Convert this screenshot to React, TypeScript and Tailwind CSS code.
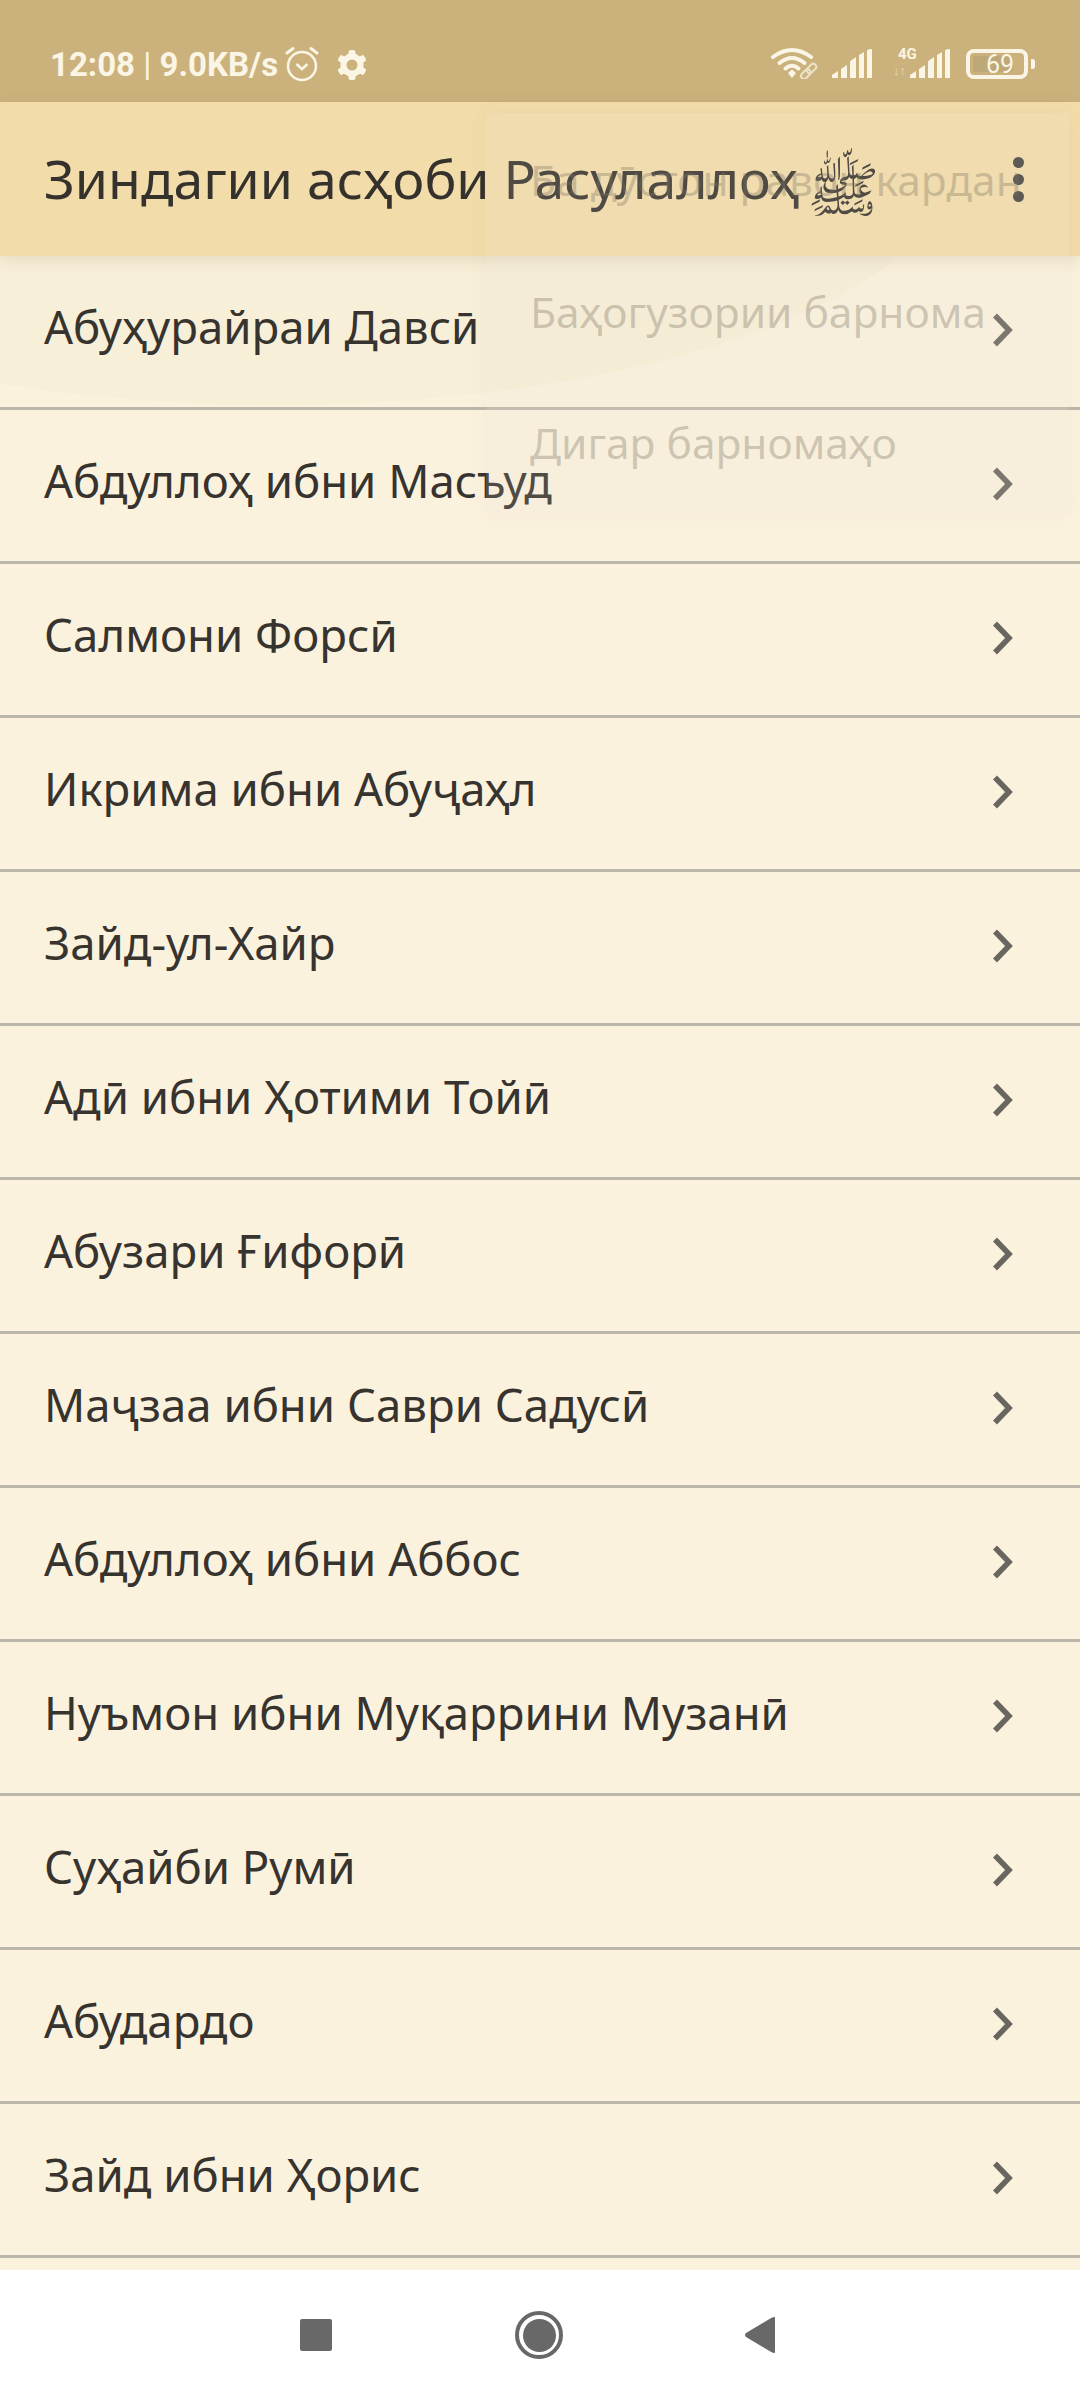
const COMPANIONS = [
  'Абуҳурайраи Давсӣ',
  'Абдуллоҳ ибни Масъуд',
  'Салмони Форсӣ',
  'Икрима ибни Абуҷаҳл',
  'Зайд-ул-Хайр',
  'Адӣ ибни Ҳотими Тойӣ',
  'Абузари Ғифорӣ',
  'Маҷзаа ибни Саври Садусӣ',
  'Абдуллоҳ ибни Аббос',
  'Нуъмон ибни Муқаррини Музанӣ',
  'Суҳайби Румӣ',
  'Абудардо',
  'Зайд ибни Ҳорис',
]

const MENU_ITEMS = ['Ба дӯстон равон кардан', 'Баҳогузории барнома', 'Дигар барномаҳо']

function SignalBars() {
  return (
    <svg width="40" height="30" viewBox="0 0 40 30" fill="#fbf5e6">
      <path d="M0 29 L0 26 L6 22 L6 29 Z" />
      <path d="M9 29 V20 L15 16 V29 Z" />
      <path d="M18 29 V13 Q18 12 19 11.500 L24 8 V29 Z" />
      <path d="M27 29 V6 L32 3 V29 Z" />
      <path d="M35 29 V2 Q35 1 36 0.500 L40 0 V29 Z" />
    </svg>
  )
}

function WifiIcon() {
  return (
    <svg width="48" height="32" viewBox="0 0 48 32" fill="none">
      <path d="M2 10 Q21 -4 40 10" stroke="#fbf5e6" strokeWidth="4" strokeLinecap="round" />
      <path d="M8.500 16 Q21 6 33.500 16" stroke="#fbf5e6" strokeWidth="4" strokeLinecap="round" />
      <path d="M14.500 21.500 Q21 16 27.500 21.500" stroke="#fbf5e6" strokeWidth="4" strokeLinecap="round" />
      <path d="M17 26 L21 22.500 L25 26 L21 31 Z" fill="#fbf5e6" />
      <g stroke="#ece2c8" strokeWidth="2" transform="rotate(-45 38 24)">
        <rect x="28" y="21" width="11" height="6" rx="3" />
        <rect x="36" y="21" width="11" height="6" rx="3" />
      </g>
    </svg>
  )
}

function AlarmIcon() {
  return (
    <svg width="34" height="36" viewBox="0 0 34 36" fill="none" stroke="#fbf5e6">
      <circle cx="17" cy="20" r="14" strokeWidth="2.500" />
      <path d="M11.500 18 L17 23 L22.500 18" strokeWidth="2.500" />
      <path d="M2 7 L8 2.500" strokeWidth="3" strokeLinecap="round" />
      <path d="M32 7 L26 2.500" strokeWidth="3" strokeLinecap="round" />
    </svg>
  )
}

function GearIcon() {
  return (
    <svg width="30" height="30" viewBox="0 0 30 30">
      <g fill="#fbf5e6">
        <circle cx="15" cy="15" r="11.500" />
        <rect x="11.500" y="0" width="7" height="30" rx="2" />
        <rect x="11.500" y="0" width="7" height="30" rx="2" transform="rotate(60 15 15)" />
        <rect x="11.500" y="0" width="7" height="30" rx="2" transform="rotate(120 15 15)" />
      </g>
      <circle cx="15" cy="15" r="5.500" fill="#cbb27c" />
    </svg>
  )
}

function Chevron() {
  return (
    <svg className="mb-[3px]" width="22" height="34" viewBox="0 0 22 34" fill="none">
      <path d="M3 2.500 L17 17 L3 31.500" stroke="#69665f" strokeWidth="5.500" />
    </svg>
  )
}

function StatusBar() {
  return (
    <div className="flex h-[102px] shrink-0 items-start bg-[#cbb27c] pt-[46px] pl-[50px] pr-[45px] text-[#fbf5e6]">
      <span className="font-['Roboto',sans-serif] text-[33px] leading-[38px] font-bold whitespace-nowrap">
        12:08 <span className="font-normal">|</span> 9.0KB/s
      </span>
      <span className="ml-[7px]">
        <AlarmIcon />
      </span>
      <span className="ml-[18px] mt-[4px]">
        <GearIcon />
      </span>
      <div className="ml-auto flex items-start pt-[1px]">
        <span className="mr-[-3px]">
          <WifiIcon />
        </span>
        <span className="ml-[16px] mt-[2px]">
          <SignalBars />
        </span>
        <div className="relative ml-[38px] mt-[2px]">
          <span className="absolute -left-[12px] -top-[2px] font-['Roboto',sans-serif] text-[15px] leading-[15px] font-bold">
            4G
          </span>
          <span className="absolute -left-[17px] top-[15px] text-[13px] leading-[14px] font-['Roboto',sans-serif] text-[#e7dcc0]">
            ↓↑
          </span>
          <SignalBars />
        </div>
        <div className="ml-[16px] mt-[2px] flex items-center">
          <div className="flex h-[30px] w-[62px] items-center rounded-[8px] border-[4px] border-[#fbf5e6] p-[3px]">
            <div className="flex h-full w-[40px] items-center justify-center rounded-[2px] bg-[#bda877]">
              <span className="ml-[14px] font-['Roboto',sans-serif] text-[25px] leading-none text-[#fbf5e6]">
                69
              </span>
            </div>
          </div>
          <div className="ml-[3px] h-[10px] w-[4px] rounded-r-[2px] bg-[#fbf5e6]" />
        </div>
      </div>
    </div>
  )
}

function AppBar() {
  return (
    <header className="relative z-10 flex h-[154px] shrink-0 items-center bg-[#f2dcaa] pl-[44px] shadow-[0_4px_14px_rgba(90,70,30,0.12)]">
      <h1 className="text-[53.500px] leading-none font-normal whitespace-nowrap text-[#35312c]">
        Зиндагии асҳоби Расулаллоҳ
      </h1>
      <span className="ml-[8px] mt-[22px] font-['DejaVu_Sans',serif] text-[60px] leading-none text-[#35312c]">
        ﷺ
      </span>
      <div className="absolute left-[1013px] top-[55px] flex flex-col gap-[6px]">
        <span className="size-[11px] rounded-full bg-[#45433f]" />
        <span className="size-[11px] rounded-full bg-[#45433f]" />
        <span className="size-[11px] rounded-full bg-[#45433f]" />
      </div>
    </header>
  )
}

function CompanionRow({ name }: { name: string }) {
  return (
    <li className="flex h-[154px] shrink-0 items-center justify-between border-b-[3px] border-[#bcb7ab] pl-[44px] pr-[66px]">
      <span className="mb-[10px] text-[45.500px] leading-none whitespace-nowrap text-[#37332e]">{name}</span>
      <Chevron />
    </li>
  )
}

// popup is caught mid fade-in, so it's only a faint wash over the page
function FadingMenu() {
  return (
    <div className="absolute left-[486px] top-[113px] z-20 flex h-[402px] w-[583px] flex-col overflow-hidden bg-[#e4dcc6]/15 pl-[44px] shadow-[0_0_20px_rgba(120,100,60,0.05)]">
      {MENU_ITEMS.map((item) => (
        <div key={item} className="flex h-[131.500px] shrink-0 items-center pt-[3px]">
          <span className="text-[42.500px] leading-none whitespace-nowrap text-[#7d7464]/35">{item}</span>
        </div>
      ))}
    </div>
  )
}

function NavBar() {
  return (
    <nav className="relative flex h-[130px] shrink-0 items-center bg-white pl-[300px]">
      <div className="size-[32px] rounded-[2px] bg-[#686868]" />
      <div className="ml-[183px] flex size-[48px] items-center justify-center rounded-full border-[4px] border-[#686868]">
        <div className="size-[33px] rounded-full bg-[#686868]" />
      </div>
      <svg className="ml-[182px]" width="30" height="36" viewBox="0 0 30 36">
        <path d="M30 0 L30 36 L27 35.500 L1 20 Q-1 18 1 16 L27 0.500 Z" fill="#686868" />
      </svg>
    </nav>
  )
}

export default function App() {
  return (
    <div className="relative flex h-[2400px] w-[1080px] flex-col overflow-hidden bg-[#fbf2de] font-['Noto_Sans',sans-serif]">
      <StatusBar />
      <AppBar />
      <main className="relative min-h-0 flex-1 overflow-hidden">
        <div className="pointer-events-none absolute -left-[412px] -top-[361px] h-[510px] w-[1374px] rounded-[50%] bg-[#e6d6b4]/10" />
        <ul className="relative flex flex-col">
          {COMPANIONS.map((name) => (
            <CompanionRow key={name} name={name} />
          ))}
        </ul>
      </main>
      <NavBar />
      <FadingMenu />
    </div>
  )
}
